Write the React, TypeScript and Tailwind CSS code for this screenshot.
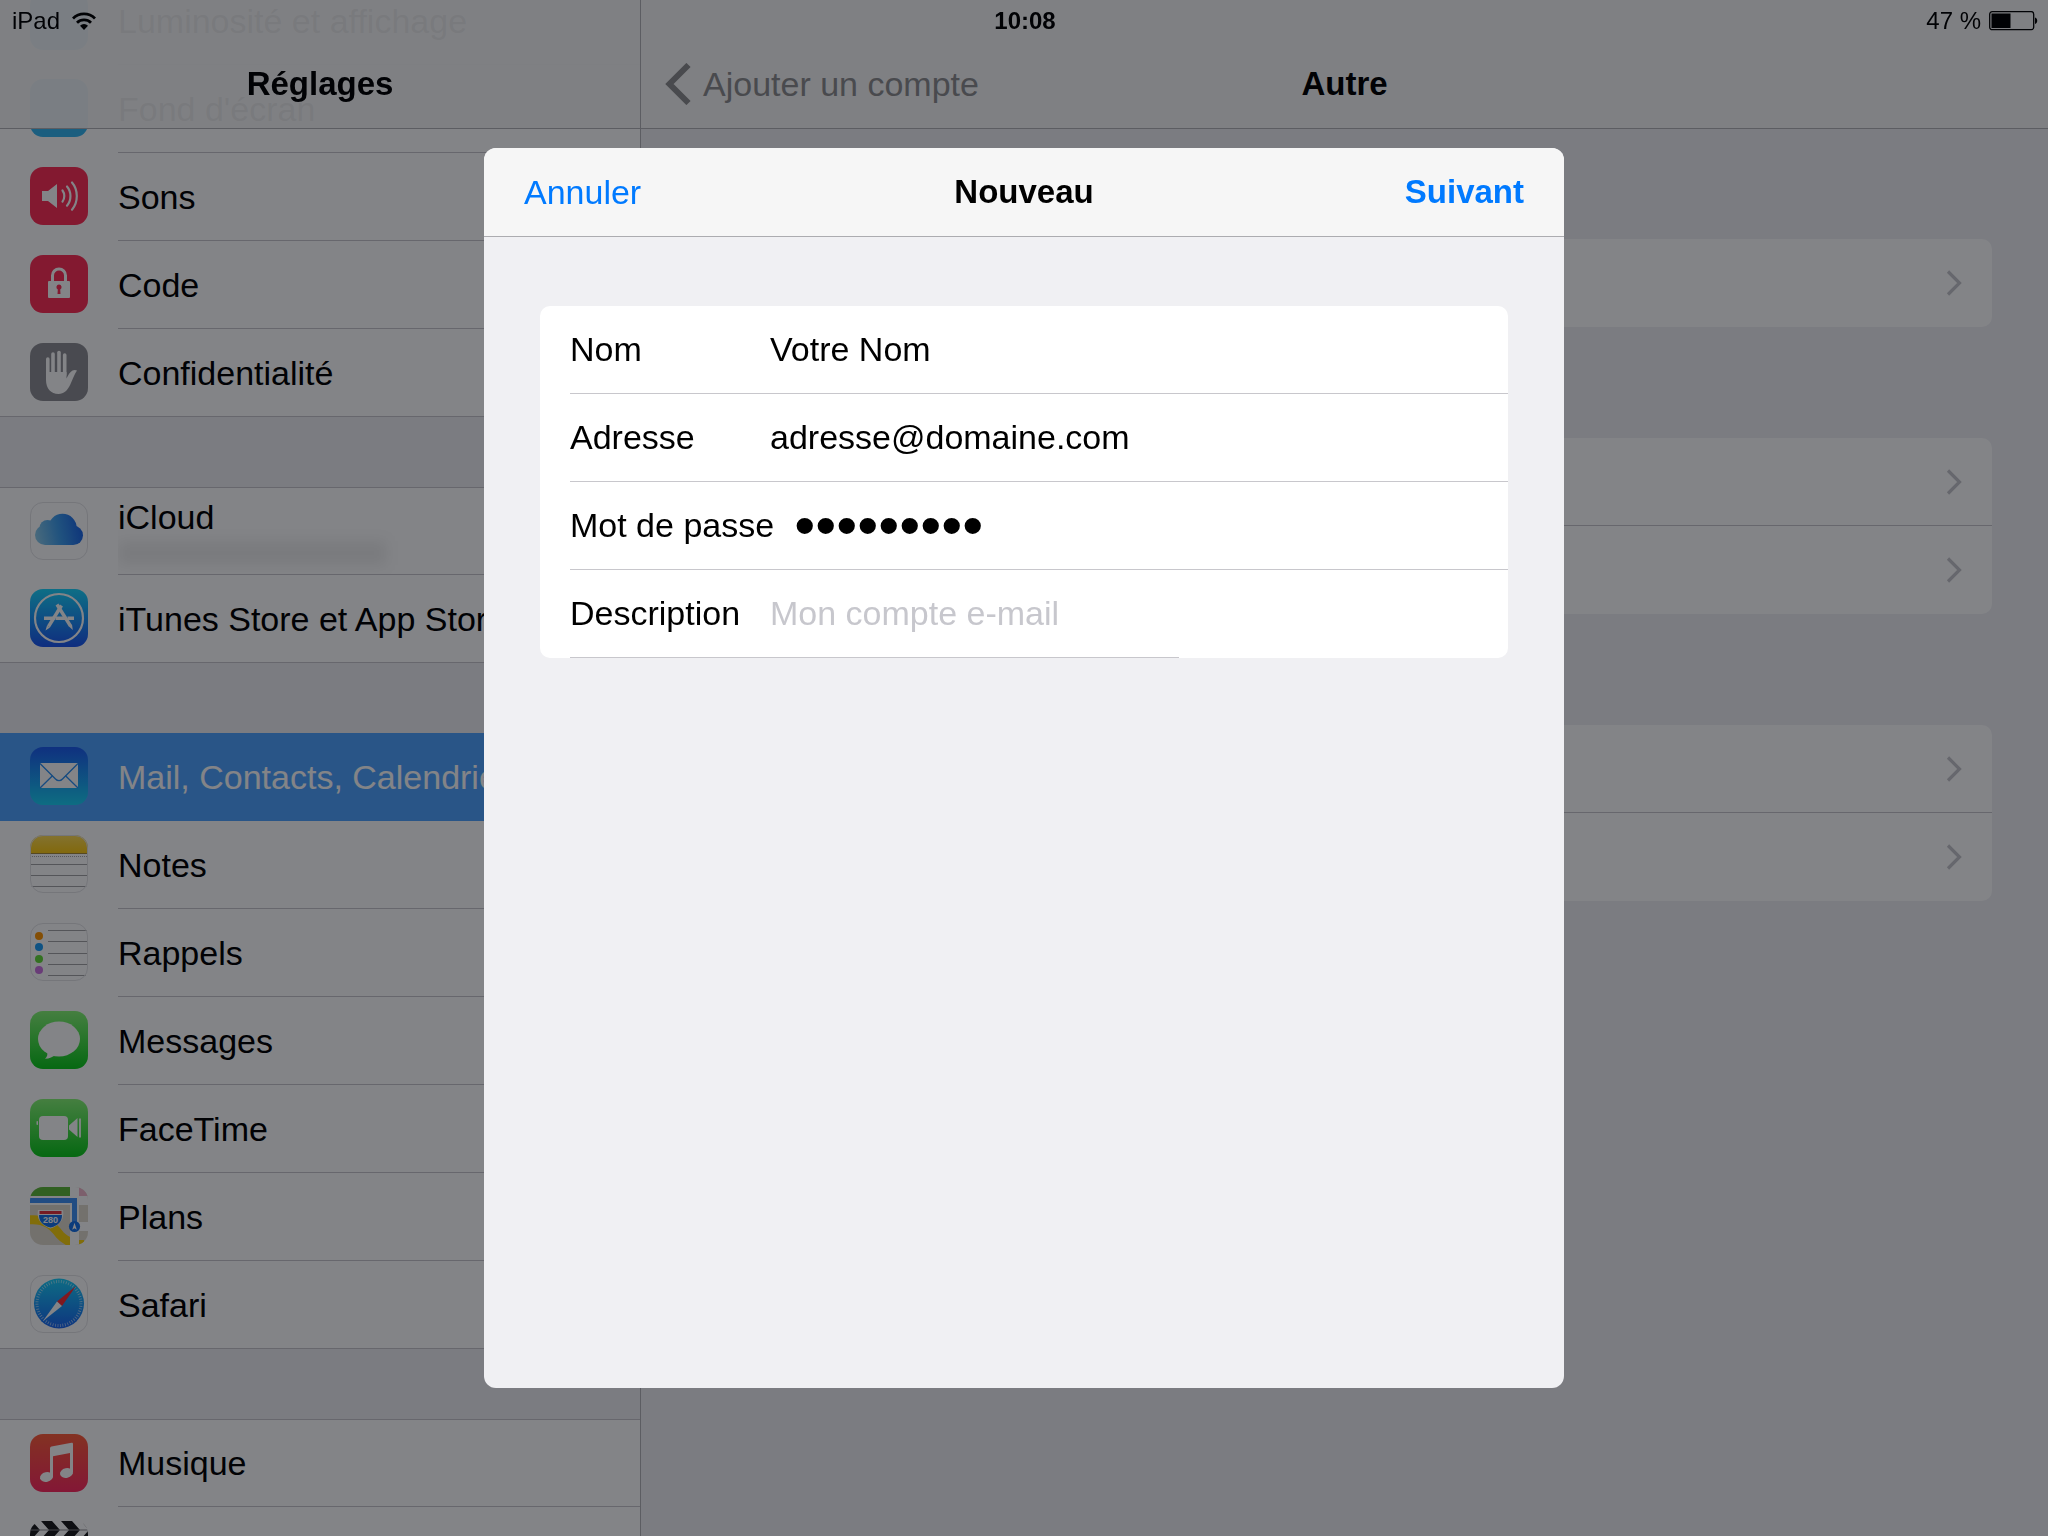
import React from 'react';
import { clsx } from 'clsx';

/* ---------- App icons (58 x 58) ---------- */

const Tile: React.FC<{ id: string; from: string; to: string; border?: boolean; children?: React.ReactNode }> = ({
  id,
  from,
  to,
  border,
  children
}) => (
  <svg viewBox="0 0 58 58" className="size-[58px] shrink-0" aria-hidden="true">
    <defs>
      <linearGradient id={`${id}-bg`} x1="0" y1="0" x2="0" y2="1">
        <stop offset="0" stopColor={from} />
        <stop offset="1" stopColor={to} />
      </linearGradient>
      <clipPath id={`${id}-clip`}>
        <rect width="58" height="58" rx="13" />
      </clipPath>
    </defs>
    <g clipPath={`url(#${id}-clip)`}>
      <rect width="58" height="58" fill={`url(#${id}-bg)`} />
      {children}
    </g>
    {border && <rect x="0.5" y="0.5" width="57" height="57" rx="12.5" fill="none" stroke="#e3e3e6" />}
  </svg>
);

const BrightnessIcon = () => <Tile id="brightness" from="#33b4f0" to="#33b4f0" />;

const WallpaperIcon = () => <Tile id="wallpaper" from="#33b4f0" to="#33b4f0" />;

const SoundIcon = () => (
  <Tile id="sound" from="#ff2d55" to="#ff2d55">
    <path d="M12 24h6l9-7v24l-9-7h-6z" fill="#fff" />
    <g fill="none" stroke="#fff" strokeWidth="2.2" strokeLinecap="round">
      <path d="M32.5 23.5c2.4 3.2 2.4 8 0 11.2" />
      <path d="M37 19.5c4.6 5.2 4.6 14 0 19.2" />
      <path d="M42 15.5c6.4 7.4 6.4 19.8 0 27.2" />
    </g>
  </Tile>
);

const LockIcon = () => (
  <Tile id="lock" from="#ff2d55" to="#ff2d55">
    <path d="M22.5 27v-6.500a6.500 6.500 0 0 1 13 0V27" fill="none" stroke="#fff" strokeWidth="3" />
    <rect x="18" y="26" width="22" height="17" rx="1" fill="#fff" />
    <path d="M29 29.500a2.600 2.600 0 0 1 1.200 4.900l.3 4.600h-3l.3-4.600a2.600 2.600 0 0 1 1.200-4.900z" fill="#ff2d55" />
  </Tile>
);

const HandIcon = () => (
  <Tile id="hand" from="#8e8e93" to="#8e8e93">
    <g fill="none" stroke="#fff" strokeWidth="3.6" strokeLinecap="round">
      <path d="M17.800 16v18" />
      <path d="M23 11v20" />
      <path d="M29 9.500v20" />
      <path d="M34.700 12v20" />
    </g>
    <path
      d="M16 29h20.500v6.500c1.800-3.400 3.200-6.500 6-8 1.600-.9 3.600-.6 4.500.1-2.600 3.600-4.300 9-6.800 14.200C37.500 47.500 34 51 28.500 51 21 51 16 45.500 16 37z"
      fill="#fff"
    />
  </Tile>
);

const CloudIcon = () => (
  <Tile id="cloud" from="#ffffff" to="#ffffff" border>
    <linearGradient id="cloud-fill" gradientUnits="userSpaceOnUse" x1="5" y1="36" x2="53" y2="26">
      <stop offset="0" stopColor="#8fcdea" />
      <stop offset="0.5" stopColor="#3f9fee" />
      <stop offset="1" stopColor="#1a63e6" />
    </linearGradient>
    <g fill="url(#cloud-fill)">
      <circle cx="32.500" cy="26" r="14.200" />
      <circle cx="17.500" cy="26" r="8" />
      <circle cx="15" cy="33" r="10" />
      <circle cx="43.300" cy="33.300" r="9.700" />
      <rect x="15" y="28" width="28" height="15" />
    </g>
  </Tile>
);

const StoreIcon = () => (
  <Tile id="store" from="#1ad5fd" to="#1d55f0">
    <circle cx="29" cy="29" r="24" fill="none" stroke="#fff" strokeWidth="2.200" />
    <g stroke="#fff" strokeWidth="3.400">
      <path d="M31.500 16.500 18.500 37.500" />
      <path d="M27 15.500 40.500 37" />
      <path d="M14 29.300h11.500" />
      <path d="M26 29.300h9" />
      <path d="M37.500 29.300h6.500" />
    </g>
    <path d="M17 36.500l3 2-4.500 3zM39 37.500l3-2 .8 5.500z" fill="#fff" />
  </Tile>
);

const MailIcon = () => (
  <Tile id="mail" from="#1d5cf0" to="#1ad2f5">
    <rect x="10" y="16" width="38" height="25" fill="#fff" />
    <g fill="none" stroke="#2a8ff3" strokeWidth="1.300">
      <path d="M10 16.500 25.500 32c2 2.200 5 2.200 7 0L48 16.500" />
      <path d="M10 41l12.500-12.200" />
      <path d="M48 41 35.500 28.800" />
    </g>
  </Tile>
);

const NotesIcon = () => (
  <Tile id="notes" from="#ffffff" to="#ffffff" border>
    <linearGradient id="notes-top" x1="0" y1="0" x2="0" y2="1">
      <stop offset="0" stopColor="#ffdc57" />
      <stop offset="1" stopColor="#fdca10" />
    </linearGradient>
    <rect width="58" height="18" fill="url(#notes-top)" />
    <path d="M0 18.500h58" stroke="#a58a3a" />
    <path d="M0 21.500h58" stroke="#aaa" strokeDasharray="1 1" />
    <path d="M0 29.500h58M0 40.500h58M0 51.500h58" stroke="#a3a3a6" />
  </Tile>
);

const RemindersIcon = () => (
  <Tile id="reminders" from="#ffffff" to="#ffffff" border>
    <path d="M18 7.500h40M18 18.500h40M18 30.500h40M18 41.500h40M18 52.500h40" stroke="#a3a3a6" />
    <circle cx="9" cy="13" r="4" fill="#ff9500" />
    <circle cx="9" cy="24" r="4" fill="#1b9df8" />
    <circle cx="9" cy="36" r="4" fill="#63da38" />
    <circle cx="9" cy="47" r="4" fill="#cc73e1" />
  </Tile>
);

const MessagesIcon = () => (
  <Tile id="messages" from="#86f575" to="#0bc91a">
    <ellipse cx="29" cy="28" rx="21" ry="17.500" fill="#fff" />
    <path d="M17 40c1 3.500.2 6-2 7.800 4.500-.2 8-1.600 10.500-4z" fill="#fff" />
  </Tile>
);

const FaceTimeIcon = () => (
  <Tile id="facetime" from="#86f575" to="#0bc91a">
    <rect x="9" y="17" width="29" height="24" rx="4" fill="#fff" />
    <rect x="6.500" y="22" width="1.500" height="4" rx="0.700" fill="#fff" />
    <path d="M39 26.500 47.500 19v19L39 30.500z" fill="#fff" />
    <path d="M50 19.500v19" stroke="#fff" strokeWidth="1.800" />
  </Tile>
);

const MapsIcon = () => (
  <Tile id="maps" from="#e0d9cc" to="#e0d9cc">
    <rect width="40" height="9" fill="#5fb83a" />
    <rect x="49" width="9" height="9" fill="#f2b6cb" />
    <path d="M-2 33C16 31 24 40 30 48c4 5 10 7 16 10" fill="none" stroke="#fbd20a" strokeWidth="9" />
    <path d="M49 53h5v5h-5z" fill="#fbd20a" />
    <rect y="9" width="58" height="9" fill="#fff" />
    <rect x="49" y="35" width="9" height="9" fill="#fff" />
    <rect x="40" width="9" height="58" fill="#fff" />
    <path d="M0 13.500h44.500V38" fill="none" stroke="#3f92f5" strokeWidth="5" />
    <circle cx="44.500" cy="39.500" r="5.600" fill="#1673ea" />
    <path d="M44.500 35.800l2.300 7-2.300-1.500-2.300 1.500z" fill="#fff" />
    <path d="M8 23h25c1.500 8-2 15-12.500 18.500C10 38 6.500 31 8 23z" fill="#fff" />
    <path d="M9.500 24h22v3h-22z" fill="#e6323c" />
    <path d="M9 28h23c0 6-3 10.500-11.500 12.500C12 38.500 9 34 9 28z" fill="#1673ea" />
    <text x="20.500" y="35.500" fontSize="9" fontWeight="700" textAnchor="middle" fill="#fff">
      280
    </text>
  </Tile>
);

const SafariIcon = () => (
  <Tile id="safari" from="#ffffff" to="#ffffff" border>
    <linearGradient id="safari-fill" x1="0" y1="0" x2="0" y2="1">
      <stop offset="0" stopColor="#19cffa" />
      <stop offset="1" stopColor="#1c66f0" />
    </linearGradient>
    <circle cx="29" cy="28.500" r="25" fill="url(#safari-fill)" />
    <circle
      cx="29"
      cy="28.500"
      r="22"
      fill="none"
      stroke="#fff"
      strokeOpacity="0.6"
      strokeWidth="3"
      strokeDasharray="0.800 1.700"
    />
    <path d="M46 11 32 31l-5-4.500z" fill="#fb2b33" />
    <path d="M13 46 27 26.500l5 4.500z" fill="#fff" />
  </Tile>
);

const MusicIcon = () => (
  <Tile id="music" from="#ff5e3a" to="#ff2a60">
    <path d="M20 43V14.500c0-1 .6-1.700 1.500-1.900L41.500 8.700c.9-.2 1.500.3 1.500 1.200V38h-3V19l-17 3.300V43z" fill="#fff" />
    <ellipse cx="16.500" cy="43" rx="6.600" ry="4.800" fill="#fff" transform="rotate(-12 16.500 43)" />
    <ellipse cx="36.500" cy="39" rx="6.600" ry="4.800" fill="#fff" transform="rotate(-12 36.500 39)" />
  </Tile>
);

const VideosIcon = () => (
  <Tile id="videos" from="#ffffff" to="#ffffff">
    <g fill="#1b1b1d">
      <path d="M-9 0H2l8 9-8 9H-9l8-9z" />
      <path d="M11 0h11l8 9-8 9H11l8-9z" />
      <path d="M31 0h11l8 9-8 9H31l8-9z" />
      <path d="M51 0h11v18H51l8-9z" />
      <rect y="18" width="58" height="40" />
    </g>
    <path d="M0 9h58" stroke="#8a8a8d" />
  </Tile>
);

/* ---------- Status bar glyphs ---------- */

const WifiIcon = () => (
  <svg viewBox="0 0 24 18" className="h-[18px] w-6" aria-hidden="true">
    <g fill="none" stroke="#000" strokeWidth="2.800">
      <path d="M1 6.500a15.500 15.500 0 0 1 22 0" />
      <path d="M5 10.700a9.900 9.900 0 0 1 14 0" />
    </g>
    <path d="M12 18 8 13.700a5.800 5.800 0 0 1 8 0z" />
  </svg>
);

const BatteryIcon = () => (
  <svg viewBox="0 0 49 20" className="h-5 w-[49px]" aria-hidden="true">
    <rect x="0.700" y="0.700" width="44" height="18" rx="2.500" fill="none" stroke="#000" strokeWidth="1.300" />
    <rect x="2.500" y="2.500" width="19" height="14.500" />
    <path d="M46 6.500c3 .5 3 6 0 6.500z" />
  </svg>
);

const Chevron = () => (
  <svg viewBox="0 0 16 26" className="h-[26px] w-4" aria-hidden="true">
    <path d="M2 1.500 13.500 13 2 24.500" fill="none" stroke="#c7c7cc" strokeWidth="3.200" />
  </svg>
);

/* ---------- Data ---------- */

type Entry = { label: string; icon: React.ReactNode; active?: boolean; masked?: boolean };

const groups: Entry[][] = [
  [
    { label: 'Luminosité et affichage', icon: <BrightnessIcon /> },
    { label: "Fond d'écran", icon: <WallpaperIcon /> },
    { label: 'Sons', icon: <SoundIcon /> },
    { label: 'Code', icon: <LockIcon /> },
    { label: 'Confidentialité', icon: <HandIcon /> }
  ],
  [
    { label: 'iCloud', icon: <CloudIcon />, masked: true },
    { label: 'iTunes Store et App Store', icon: <StoreIcon /> }
  ],
  [
    { label: 'Mail, Contacts, Calendriers', icon: <MailIcon />, active: true },
    { label: 'Notes', icon: <NotesIcon /> },
    { label: 'Rappels', icon: <RemindersIcon /> },
    { label: 'Messages', icon: <MessagesIcon /> },
    { label: 'FaceTime', icon: <FaceTimeIcon /> },
    { label: 'Plans', icon: <MapsIcon /> },
    { label: 'Safari', icon: <SafariIcon /> }
  ],
  [
    { label: 'Musique', icon: <MusicIcon /> },
    { label: '', icon: <VideosIcon /> }
  ]
];

const accountSections = [1, 2, 2];

const fields = [
  { id: 'nom', label: 'Nom', type: 'text', value: 'Votre Nom' },
  { id: 'adresse', label: 'Adresse', type: 'email', value: 'adresse@domaine.com' },
  { id: 'passe', label: 'Mot de passe', type: 'password', value: 'motpasse1' },
  { id: 'description', label: 'Description', type: 'text', value: '', placeholder: 'Mon compte e-mail' }
];

/* ---------- Layout ---------- */

const StatusBar = () => (
  <div className="absolute inset-x-0 top-0 z-20 grid h-[42px] grid-cols-3 items-center pr-[10px] pl-3 text-2xl">
    <div className="flex items-center gap-3">
      <span>iPad</span>
      <WifiIcon />
    </div>
    <div className="text-center font-bold">10:08</div>
    <div className="flex items-center justify-end gap-2">
      <span>47 %</span>
      <BatteryIcon />
    </div>
  </div>
);

const SettingsRow: React.FC<{ entry: Entry; first: boolean; last: boolean }> = ({ entry, first, last }) => (
  <li
    className={clsx(
      'h-[88px]',
      entry.active ? 'bg-[#50a4ff] text-white' : 'bg-white',
      first && !entry.active && 'border-t border-[#c8c7cc]',
      last && 'border-b border-[#c8c7cc]'
    )}
  >
    <a href="#" aria-label={entry.label || 'Vidéos'} className="flex h-full gap-[30px] pl-[30px]">
      <span className="pt-[14px]">{entry.icon}</span>
      <span
        className={clsx(
          'flex h-full flex-1 flex-col justify-center overflow-hidden whitespace-nowrap',
          !last && !entry.active && 'border-b border-[#c8c7cc]'
        )}
      >
        {entry.label}
        {entry.masked && <span className="mt-1 h-6 w-[268px] bg-black/7 blur-[7px]" />}
      </span>
    </a>
  </li>
);

const Sidebar = () => (
  <aside className="w-[641px] shrink-0 border-r border-[#b2b2b6]">
    <header className="sticky top-0 z-10 flex h-[129px] items-center justify-center border-b border-[#b2b2b6] bg-[#f8f8f8]/95 pt-10">
      <h1 className="text-[33px] font-bold">Réglages</h1>
    </header>
    {/* list is scrolled under the translucent header */}
    <nav className="-mt-[152px] flex flex-col gap-[70px]">
      {groups.map((group, idx) => (
        <ul key={idx}>
          {group.map((entry, row) => (
            <SettingsRow key={row} entry={entry} first={row === 0} last={row === group.length - 1} />
          ))}
        </ul>
      ))}
    </nav>
  </aside>
);

const AccountPane = () => (
  <section className="flex-1">
    <header className="grid h-[129px] grid-cols-3 items-center border-b border-[#b2b2b6] bg-[#f8f8f8] px-6 pt-10">
      <button type="button" className="flex items-center gap-3 whitespace-nowrap text-[#8e8e8f]">
        <svg viewBox="0 0 26 42" className="h-[42px] w-[26px]" aria-hidden="true">
          <path d="M23.500 2 4.500 21l19 19" fill="none" stroke="currentColor" strokeWidth="6" />
        </svg>
        Ajouter un compte
      </button>
      <h2 className="text-center text-[33px] font-bold">Autre</h2>
    </header>
    <div className="flex flex-col gap-[111px] px-14 pt-[110px]">
      {accountSections.map((count, idx) => (
        <div key={idx} className="overflow-hidden rounded-[10px] bg-white">
          {Array.from({ length: count }, (_, row) => (
            <button
              key={row}
              type="button"
              aria-label="Ouvrir"
              className={clsx(
                'flex h-[88px] w-full items-center justify-end pr-[30px]',
                row < count - 1 ? 'border-b border-[#c8c7cc]' : 'pb-px'
              )}
            >
              <Chevron />
            </button>
          ))}
        </div>
      ))}
    </div>
  </section>
);

const NewAccountDialog = () => (
  <div className="absolute inset-0 z-30 flex items-center justify-center bg-[#02050a]/49">
    <form
      role="dialog"
      aria-labelledby="dialog-title"
      className="h-[1240px] w-[1080px] overflow-hidden rounded-xl bg-[#f0f0f3]"
      onSubmit={(e) => e.preventDefault()}
    >
      <header className="grid h-[89px] grid-cols-3 items-center border-b border-[#acacb0] bg-[#f6f6f6] px-10">
        <button type="button" className="justify-self-start text-[#007aff]">
          Annuler
        </button>
        <h2 id="dialog-title" className="text-center text-[33px] font-bold">
          Nouveau
        </h2>
        <button type="submit" className="justify-self-end text-[33px] font-bold text-[#007aff]">
          Suivant
        </button>
      </header>

      <div className="mx-14 mt-[69px] overflow-hidden rounded-[10px] bg-white pl-[30px]">
        {fields.map((field, idx) => (
          <div key={field.id}>
            <div className="flex h-[87px] gap-5">
              <label htmlFor={field.id} className="min-w-[180px] whitespace-nowrap leading-[86px]">
                {field.label}
              </label>
              <input
                id={field.id}
                type={field.type}
                defaultValue={field.value}
                placeholder={field.placeholder}
                autoComplete="off"
                className={clsx(
                  'h-full min-w-0 flex-1 bg-transparent outline-none placeholder:text-[#c7c7cd]',
                  field.type === 'password' && 'text-6xl'
                )}
              />
            </div>
            <div className={clsx('h-px bg-[#c8c7cc]', idx === fields.length - 1 && 'w-[609px]')} />
          </div>
        ))}
      </div>
    </form>
  </div>
);

const App: React.FC = () => {
  return (
    <div className='relative flex h-screen overflow-hidden bg-[#efeff4] font-["Liberation_Sans",Arial,sans-serif] text-[34px] leading-10 text-black'>
      <StatusBar />
      <Sidebar />
      <AccountPane />
      <NewAccountDialog />
    </div>
  );
};

export default App;
